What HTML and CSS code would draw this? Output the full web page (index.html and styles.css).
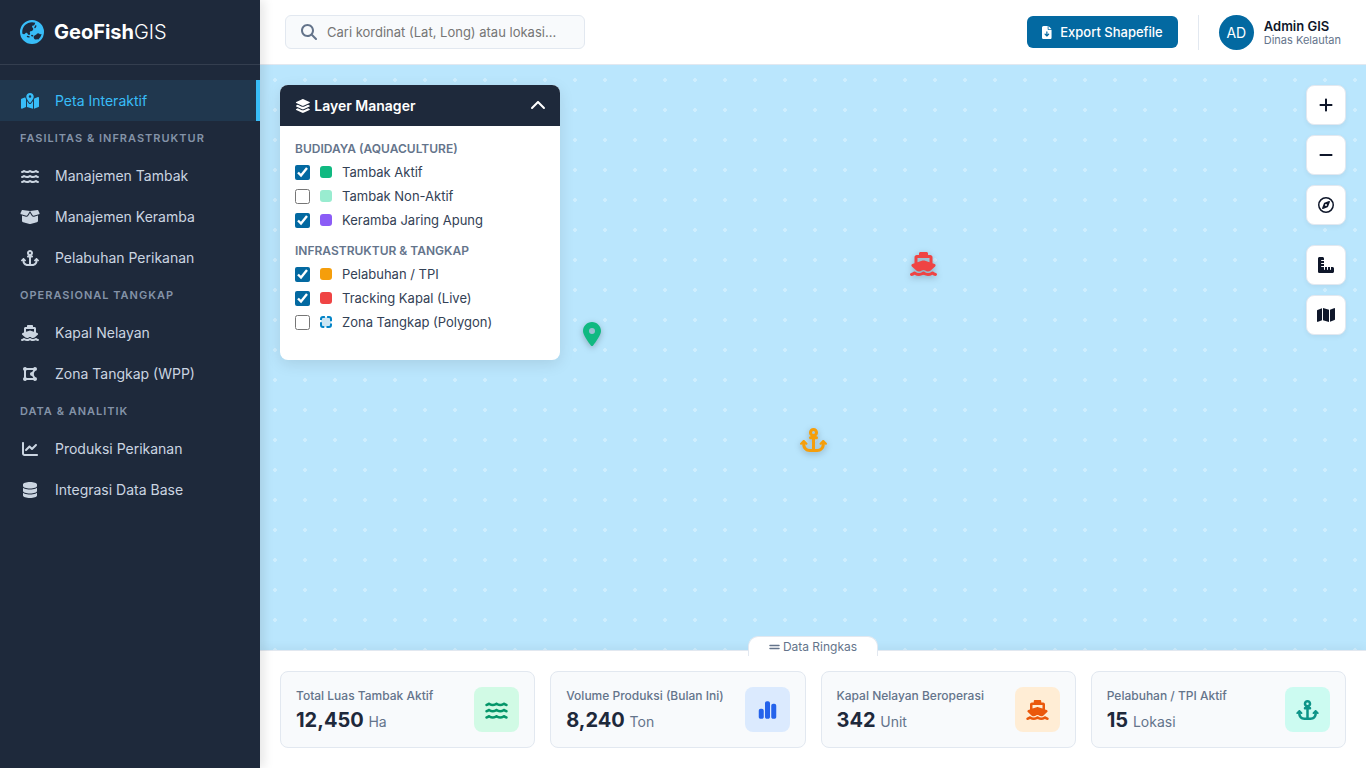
FILE: index.html
```html
<!DOCTYPE html>
<html lang="en">
<head>
    <meta charset="UTF-8">
    <meta name="viewport" content="width=device-width, initial-scale=1.0">
    <title>GeoFishGIS</title>
    <link rel="stylesheet" href="styles.css">
</head>
<body>
    <!-- Icon sprite -->
    <svg class="sprite" xmlns="http://www.w3.org/2000/svg">
        <symbol id="i-earth" viewBox="0 0 512 512"><path d="M51.7 295.1l31.7 6.3c7.9 1.6 16-.9 21.7-6.6l15.4-15.4c11.6-11.6 31.1-8.4 38.4 6.2l9.3 18.5c4.8 9.6 14.6 15.7 25.4 15.7c15.2 0 26.1-14.6 21.7-29.2l-6-19.9c-4.6-15.4 6.9-30.9 23-30.9h2.3c13.4 0 25.9-6.7 33.3-17.8l10.7-16.1c5.6-8.5 5.3-19.6-.8-27.7l-16.1-21.5c-10.3-13.7-3.3-33.5 13.4-37.6l17-4.3c7.5-1.9 13.6-7.2 16.5-14.4l16.4-40.9C303.4 52.1 280.2 48 256 48C141.1 48 48 141.1 48 256c0 13.4 1.3 26.5 3.7 39.1zm407.7 4.6c-3-.3-6-.1-9 .8l-15.8 4.4c-6.7 1.9-13.8-.9-17.5-6.7l-2-3.1c-6-9.4-16.4-15.1-27.6-15.1s-21.6 5.7-27.6 15.1l-6.1 9.5c-1.4 2.2-3.4 4.1-5.7 5.3L312 330.1c-18.1 10.1-25.5 32.4-17 51.3l5.5 12.4c8.6 19.2 30.7 28.5 50.5 21.1l2.6-1c10-3.7 21.3-2.2 29.9 4.1l1.5 1.1c37.2-29.5 64.1-71.4 74.4-119.5zM0 256a256 256 0 1 1 512 0A256 256 0 1 1 0 256zm144.5 92.1c-2.1 8.6 3.1 17.3 11.6 19.4l32 8c8.6 2.1 17.3-3.1 19.4-11.6s-3.1-17.3-11.6-19.4l-32-8c-8.6-2.1-17.3 3.1-19.4 11.6zm92-20c-2.1 8.6 3.1 17.3 11.6 19.4l16 4c8.6 2.1 17.3-3.1 19.4-11.6s-3.1-17.3-11.6-19.4l-16-4c-8.6-2.1-17.3 3.1-19.4 11.6zM343.2 113.7c-7.9-4-17.5-.7-21.5 7.2l-16 32c-4 7.9-.7 17.5 7.2 21.5s17.5 .7 21.5-7.2l16-32c4-7.9 .7-17.5-7.2-21.5z"/></symbol>
        <symbol id="i-map-dot" viewBox="0 0 576 512"><path d="M408 120c0 54.6-73.1 151.9-105.2 192c-7.7 9.6-22 9.6-29.6 0C241.1 271.9 168 174.6 168 120C168 53.7 221.7 0 288 0s120 53.7 120 120zm8 80.4c3.5-6.9 6.7-13.8 9.6-20.6c.5-1.2 1-2.5 1.5-3.7l116-46.4C558.9 123.4 576 135 576 152V422.8c0 9.8-6 18.6-15.1 22.3L416 503V200.4zM137.6 138.3c2.4 14.1 7.2 28.3 12.8 41.5c2.9 6.8 6.1 13.7 9.6 20.6V451.8L32.9 502.7C17.1 509 0 497.4 0 480.4V209.6c0-9.8 6-18.6 15.1-22.3l122.6-49zM327.8 332c13.9-17.4 35.7-45.7 56.2-77V504.3L192 449.4V255c20.5 31.3 42.3 59.6 56.2 77c20.5 25.6 59.1 25.6 79.6 0zM288 152a40 40 0 1 0 0-80 40 40 0 1 0 0 80z"/></symbol>
        <symbol id="i-water" viewBox="0 0 576 512"><path d="M269.5 69.9c11.1-7.9 25.9-7.9 37 0C329 85.4 356.5 96 384 96c26.9 0 55.4-10.8 77.4-26.1l0 0c11.9-8.5 28.1-7.8 39.2 1.7c14.4 11.9 32.5 21 50.6 25.2c17.2 4 27.9 21.2 23.9 38.4s-21.2 27.9-38.4 23.9c-24.5-5.7-44.9-16.5-58.2-25C449.5 149.7 417 160 384 160c-31.9 0-60.6-9.9-80.4-18.9c-5.8-2.7-11.1-5.3-15.6-7.7c-4.5 2.4-9.7 5.1-15.6 7.7c-19.8 9-48.5 18.9-80.4 18.9c-33 0-65.5-10.3-94.5-25.8c-13.4 8.4-33.7 19.3-58.2 25c-17.2 4-34.4-6.7-38.4-23.9s6.7-34.4 23.9-38.4c18.1-4.2 36.2-13.3 50.6-25.2c11.1-9.4 27.3-10.1 39.2-1.7l0 0C136.7 85.2 165.1 96 192 96c27.5 0 55-10.6 77.5-26.1z"/><path transform="translate(0 160)" d="M269.5 69.9c11.1-7.9 25.9-7.9 37 0C329 85.4 356.5 96 384 96c26.9 0 55.4-10.8 77.4-26.1l0 0c11.9-8.5 28.1-7.8 39.2 1.7c14.4 11.9 32.5 21 50.6 25.2c17.2 4 27.9 21.2 23.9 38.4s-21.2 27.9-38.4 23.9c-24.5-5.7-44.9-16.5-58.2-25C449.5 149.7 417 160 384 160c-31.9 0-60.6-9.9-80.4-18.9c-5.8-2.7-11.1-5.3-15.6-7.7c-4.5 2.4-9.7 5.1-15.6 7.7c-19.8 9-48.5 18.9-80.4 18.9c-33 0-65.5-10.3-94.5-25.8c-13.4 8.4-33.7 19.3-58.2 25c-17.2 4-34.4-6.7-38.4-23.9s6.7-34.4 23.9-38.4c18.1-4.2 36.2-13.3 50.6-25.2c11.1-9.4 27.3-10.1 39.2-1.7l0 0C136.7 85.2 165.1 96 192 96c27.5 0 55-10.6 77.5-26.1z"/><path transform="translate(0 320)" d="M269.5 69.9c11.1-7.9 25.9-7.9 37 0C329 85.4 356.5 96 384 96c26.9 0 55.4-10.8 77.4-26.1l0 0c11.9-8.5 28.1-7.8 39.2 1.7c14.4 11.9 32.5 21 50.6 25.2c17.2 4 27.9 21.2 23.9 38.4s-21.2 27.9-38.4 23.9c-24.5-5.7-44.9-16.5-58.2-25C449.5 149.7 417 160 384 160c-31.9 0-60.6-9.9-80.4-18.9c-5.8-2.7-11.1-5.3-15.6-7.7c-4.5 2.4-9.7 5.1-15.6 7.7c-19.8 9-48.5 18.9-80.4 18.9c-33 0-65.5-10.3-94.5-25.8c-13.4 8.4-33.7 19.3-58.2 25c-17.2 4-34.4-6.7-38.4-23.9s6.7-34.4 23.9-38.4c18.1-4.2 36.2-13.3 50.6-25.2c11.1-9.4 27.3-10.1 39.2-1.7l0 0C136.7 85.2 165.1 96 192 96c27.5 0 55-10.6 77.5-26.1z"/></symbol>
        <symbol id="i-box" viewBox="0 0 640 512"><path d="M58.9 42.1c3-6.1 9.6-9.6 16.3-8.7L320 64 564.8 33.4c6.7-.8 13.3 2.7 16.3 8.7l41.7 83.4c9 17.9-.6 39.6-19.8 45.1L439.6 217.3c-13.9 4-28.8-1.9-36.2-14.3L320 64 236.6 203c-7.4 12.4-22.3 18.3-36.2 14.3L37.1 170.6c-19.3-5.5-28.8-27.2-19.8-45.1L58.9 42.1zM321.1 128l54.9 91.4c14.9 24.8 44.6 36.6 72.5 28.6L576 211.6v167c0 22-15 41.2-36.4 46.6l-204.1 51c-10.2 2.6-20.9 2.6-31 0l-204.1-51C79 419.7 64 400.5 64 378.5v-167L191.6 248c27.8 8 57.6-3.8 72.5-28.6L318.9 128h2.2z"/></symbol>
        <symbol id="i-anchor" viewBox="0 0 576 512"><path d="M320 96a32 32 0 1 1 -64 0 32 32 0 1 1 64 0zm21.1 80C367 158.8 384 129.4 384 96c0-53-43-96-96-96s-96 43-96 96c0 33.4 17 62.8 42.9 80H224c-17.7 0-32 14.3-32 32s14.3 32 32 32h32V448H208c-53 0-96-43-96-96v-6.1l7 7c9.4 9.4 24.6 9.4 33.9 0s9.4-24.6 0-33.9L97 263c-9.4-9.4-24.6-9.4-33.9 0L7 319c-9.4 9.4-9.4 24.6 0 33.9s24.6 9.4 33.9 0l7-7V352c0 88.4 71.6 160 160 160h80 80c88.4 0 160-71.6 160-160v-6.1l7 7c9.4 9.4 24.6 9.4 33.9 0s9.4-24.6 0-33.9l-56-56c-9.4-9.4-24.6-9.4-33.9 0l-56 56c-9.4 9.4-9.4 24.6 0 33.9s24.6 9.4 33.9 0l7-7V352c0 53-43 96-96 96H320V240h32c17.7 0 32-14.3 32-32s-14.3-32-32-32H341.1z"/></symbol>
        <symbol id="i-ship" viewBox="0 0 576 512"><path d="M192 32c0-17.7 14.3-32 32-32H352c17.7 0 32 14.3 32 32V64h48c26.5 0 48 21.5 48 48V240l44.4 14.8c23.1 7.7 29.5 37.5 11.5 53.9l-101 92.6c-16.2 9.4-34.7 15.1-50.9 15.1c-19.6 0-40.8-7.7-59.2-20.3c-22.1-15.5-51.6-15.5-73.7 0c-17.1 11.8-38 20.3-59.2 20.3c-16.2 0-34.7-5.7-50.9-15.1l-101-92.6c-18-16.5-11.6-46.2 11.5-53.9L96 240V112c0-26.5 21.5-48 48-48h48V32zM160 218.7l107.8-35.9c13.1-4.4 27.3-4.4 40.5 0L416 218.7V128H160v90.7zM306.5 421.9C329 437.4 356.5 448 384 448c26.9 0 55.4-10.8 77.4-26.1l0 0c11.9-8.5 28.1-7.8 39.2 1.7c14.4 11.9 32.5 21 50.6 25.2c17.2 4 27.9 21.2 23.9 38.4s-21.2 27.9-38.4 23.9c-24.5-5.7-44.9-16.5-58.2-25C449.5 501.7 417 512 384 512c-31.9 0-60.6-9.9-80.4-18.9c-5.8-2.7-11.1-5.3-15.6-7.7c-4.5 2.4-9.7 5.1-15.6 7.7c-19.8 9-48.5 18.9-80.4 18.9c-33 0-65.5-10.3-94.5-25.8c-13.4 8.4-33.7 19.3-58.2 25c-17.2 4-34.4-6.7-38.4-23.9s6.7-34.4 23.9-38.4c18.1-4.2 36.2-13.3 50.6-25.2c11.1-9.4 27.3-10.1 39.2-1.7l0 0C136.7 437.2 165.1 448 192 448c27.5 0 55-10.6 77.5-26.1c11.1-7.9 25.9-7.9 37 0z"/></symbol>
        <symbol id="i-polygon" viewBox="0 0 448 512"><path d="M96 151.4V360.6c9.7 5.6 17.8 13.7 23.4 23.4H328.6c0-.1 .1-.2 .1-.3l-4.5-7.9-32-56 0 0c-1.4 .1-2.8 .1-4.2 .1c-35.3 0-64-28.7-64-64s28.7-64 64-64c1.4 0 2.9 0 4.3 .1l0 0 32-56 4.5-7.9-.1-.3H119.4c-5.6 9.7-13.7 17.8-23.4 23.4zM384.3 352c35.2 .2 63.7 28.7 63.7 64c0 35.3-28.7 64-64 64c-23.7 0-44.4-12.9-55.4-32H119.4c-11.1 19.1-31.7 32-55.4 32c-35.3 0-64-28.7-64-64c0-23.7 12.9-44.4 32-55.4V151.4C12.9 140.4 0 119.7 0 96C0 60.7 28.7 32 64 32c23.7 0 44.4 12.9 55.4 32H328.6c11.1-19.1 31.7-32 55.4-32c35.3 0 64 28.7 64 64c0 35.3-28.5 63.8-63.7 64l-4.5 7.9-32 56-2.3 4c4.2 8.5 6.5 18 6.5 28.1s-2.3 19.6-6.5 28.1l2.3 4 32 56 4.5 7.9z"/></symbol>
        <symbol id="i-chart" viewBox="0 0 512 512"><path d="M64 64c0-17.7-14.3-32-32-32S0 46.3 0 64V400c0 44.2 35.8 80 80 80H480c17.7 0 32-14.3 32-32s-14.3-32-32-32H80c-8.8 0-16-7.2-16-16V64zm406.6 86.6c12.5-12.5 12.5-32.8 0-45.3s-32.8-12.5-45.3 0L320 210.7l-57.4-57.4c-12.5-12.5-32.8-12.5-45.3 0l-112 112c-12.5 12.5-12.5 32.8 0 45.3s32.8 12.5 45.3 0L240 221.3l57.4 57.4c12.5 12.5 32.8 12.5 45.3 0l128-128z"/></symbol>
        <symbol id="i-database" viewBox="0 0 448 512"><path d="M448 80v48c0 44.2-100.3 80-224 80S0 172.2 0 128V80C0 35.8 100.3 0 224 0S448 35.8 448 80zM393.2 214.7c20.8-7.4 39.9-16.9 54.8-28.6V288c0 44.2-100.3 80-224 80S0 332.2 0 288V186.1c14.9 11.8 34 21.2 54.8 28.6C99.7 230.7 159.5 240 224 240s124.3-9.3 169.2-25.3zM0 346.1c14.9 11.8 34 21.2 54.8 28.6C99.7 390.7 159.5 400 224 400s124.3-9.3 169.2-25.3c20.8-7.4 39.9-16.9 54.8-28.6V432c0 44.2-100.3 80-224 80S0 476.2 0 432V346.1z"/></symbol>
        <symbol id="i-search" viewBox="0 0 512 512"><path d="M416 208c0 45.9-14.9 88.3-40 122.7L502.6 457.4c12.5 12.5 12.5 32.8 0 45.3s-32.8 12.5-45.3 0L330.7 376c-34.4 25.2-76.8 40-122.7 40C93.1 416 0 322.9 0 208S93.1 0 208 0S416 93.1 416 208zM208 352a144 144 0 1 0 0-288 144 144 0 1 0 0 288z"/></symbol>
        <symbol id="i-file" viewBox="0 0 384 512"><path d="M64 0C28.7 0 0 28.7 0 64V448c0 35.3 28.7 64 64 64H320c35.3 0 64-28.7 64-64V160H256c-17.7 0-32-14.3-32-32V0H64zM256 0V128H384L256 0zM216 232V334.1l31-31c9.4-9.4 24.6-9.4 33.9 0s9.4 24.6 0 33.9l-72 72c-9.4 9.4-24.6 9.4-33.9 0l-72-72c-9.4-9.4-9.4-24.6 0-33.9s24.6-9.4 33.9 0l31 31V232c0-13.3 10.7-24 24-24s24 10.7 24 24z"/></symbol>
        <symbol id="i-layers" viewBox="0 0 576 512"><path d="M264.5 5.2c14.9-6.9 32.1-6.9 47 0l218.6 101c8.5 3.9 13.9 12.4 13.9 21.8s-5.4 17.9-13.9 21.8l-218.6 101c-14.9 6.9-32.1 6.9-47 0L45.9 149.8C37.4 145.8 32 137.3 32 128s5.4-17.9 13.9-21.8L264.5 5.2zM476.9 209.6l53.2 24.6c8.5 3.9 13.9 12.4 13.9 21.8s-5.4 17.9-13.9 21.8l-218.6 101c-14.9 6.9-32.1 6.9-47 0L45.9 277.8C37.4 273.8 32 265.3 32 256s5.4-17.9 13.9-21.8l53.2-24.6 152 70.2c23.4 10.8 50.4 10.8 73.8 0l152-70.2zm-152 198.2l152-70.2 53.2 24.6c8.5 3.9 13.9 12.4 13.9 21.8s-5.4 17.9-13.9 21.8l-218.6 101c-14.9 6.9-32.1 6.9-47 0L45.9 405.8C37.4 401.8 32 393.3 32 384s5.4-17.9 13.9-21.8l53.2-24.6 152 70.2c23.4 10.8 50.4 10.8 73.8 0z"/></symbol>
        <symbol id="i-chevron" viewBox="0 0 512 512"><path d="M233.4 105.4c12.5-12.5 32.8-12.5 45.3 0l192 192c12.5 12.5 12.5 32.8 0 45.3s-32.8 12.5-45.3 0L256 173.3 86.6 342.6c-12.5 12.5-32.8 12.5-45.3 0s-12.5-32.8 0-45.3l192-192z"/></symbol>
        <symbol id="i-plus" viewBox="0 0 448 512"><path d="M256 80c0-17.7-14.3-32-32-32s-32 14.3-32 32V224H48c-17.7 0-32 14.3-32 32s14.3 32 32 32H192V432c0 17.7 14.3 32 32 32s32-14.3 32-32V288H400c17.7 0 32-14.3 32-32s-14.3-32-32-32H256V80z"/></symbol>
        <symbol id="i-minus" viewBox="0 0 448 512"><path d="M432 256c0 17.7-14.3 32-32 32L48 288c-17.7 0-32-14.3-32-32s14.3-32 32-32l352 0c17.7 0 32 14.3 32 32z"/></symbol>
        <symbol id="i-compass" viewBox="0 0 512 512"><path d="M464 256A208 208 0 1 0 48 256a208 208 0 1 0 416 0zM0 256a256 256 0 1 1 512 0A256 256 0 1 1 0 256zm306.7 69.1L162.4 380.6c-19.4 7.5-38.5-11.6-31-31l55.5-144.3c3.3-8.5 9.9-15.1 18.4-18.4l144.3-55.5c19.4-7.5 38.5 11.6 31 31L325.1 306.7c-3.2 8.5-9.9 15.1-18.4 18.4zM288 256a32 32 0 1 0 -64 0 32 32 0 1 0 64 0z"/></symbol>
        <symbol id="i-ruler" viewBox="0 0 512 512"><path d="M.2 468.9C2.7 493.1 23.1 512 48 512l96 0 320 0c26.5 0 48-21.5 48-48l0-96c0-26.5-21.5-48-48-48l-48 0 0 80c0 8.8-7.2 16-16 16s-16-7.2-16-16l0-80-64 0 0 80c0 8.8-7.2 16-16 16s-16-7.2-16-16l0-80-64 0 0 80c0 8.8-7.2 16-16 16s-16-7.2-16-16l0-80-80 0c-8.8 0-16-7.2-16-16s7.2-16 16-16l80 0 0-64-80 0c-8.8 0-16-7.2-16-16s7.2-16 16-16l80 0 0-64-80 0c-8.8 0-16-7.2-16-16s7.2-16 16-16l80 0 0-48c0-26.5-21.5-48-48-48L48 0C21.5 0 0 21.5 0 48L0 368l0 96c0 1.7 .1 3.3 .2 4.9z"/></symbol>
        <symbol id="i-map" viewBox="0 0 576 512"><path d="M384 476.1L192 421.2V35.9L384 90.8V476.1zm32-1.2V88.4L543.1 37.5c15.8-6.3 32.9 5.3 32.9 22.3V394.6c0 9.8-6 18.6-15.1 22.3L416 474.8zM15.1 95.1L160 37.2V423.6L32.9 474.5C17.1 480.8 0 469.2 0 452.2V117.4c0-9.8 6-18.6 15.1-22.3z"/></symbol>
        <symbol id="i-pin" viewBox="0 0 384 512"><path d="M215.7 499.2C267 435 384 279.4 384 192C384 86 298 0 192 0S0 86 0 192c0 87.4 117 243 168.3 307.2c12.3 15.3 35.1 15.3 47.4 0zM192 128a64 64 0 1 1 0 128 64 64 0 1 1 0-128z"/></symbol>
        <symbol id="i-bars" viewBox="0 0 448 512"><path d="M160 80c0-26.5 21.5-48 48-48h32c26.5 0 48 21.5 48 48V432c0 26.5-21.5 48-48 48H208c-26.5 0-48-21.5-48-48V80zM0 272c0-26.5 21.5-48 48-48H80c26.5 0 48 21.5 48 48V432c0 26.5-21.5 48-48 48H48c-26.5 0-48-21.5-48-48V272zM368 96h32c26.5 0 48 21.5 48 48V432c0 26.5-21.5 48-48 48H368c-26.5 0-48-21.5-48-48V144c0-26.5 21.5-48 48-48z"/></symbol>
        <symbol id="i-grip" viewBox="0 0 448 512"><path d="M32 288c-17.7 0-32 14.3-32 32s14.3 32 32 32l384 0c17.7 0 32-14.3 32-32s-14.3-32-32-32L32 288zm0-128c-17.7 0-32 14.3-32 32s14.3 32 32 32l384 0c17.7 0 32-14.3 32-32s-14.3-32-32-32L32 160z"/></symbol>
    </svg>

    <div class="app">
        <!-- Sidebar -->
        <aside class="sidebar">
            <div class="brand">
                <svg class="brand-icon"><use href="#i-earth"/></svg>
                <span class="brand-name">GeoFish<span class="brand-light">GIS</span></span>
            </div>
            <nav class="nav">
                <a class="nav-item active"><svg class="nav-icon"><use href="#i-map-dot"/></svg>Peta Interaktif</a>
                <div class="nav-label">Fasilitas &amp; Infrastruktur</div>
                <a class="nav-item"><svg class="nav-icon"><use href="#i-water"/></svg>Manajemen Tambak</a>
                <a class="nav-item"><svg class="nav-icon"><use href="#i-box"/></svg>Manajemen Keramba</a>
                <a class="nav-item"><svg class="nav-icon"><use href="#i-anchor"/></svg>Pelabuhan Perikanan</a>
                <div class="nav-label">Operasional Tangkap</div>
                <a class="nav-item"><svg class="nav-icon"><use href="#i-ship"/></svg>Kapal Nelayan</a>
                <a class="nav-item"><svg class="nav-icon"><use href="#i-polygon"/></svg>Zona Tangkap (WPP)</a>
                <div class="nav-label">Data &amp; Analitik</div>
                <a class="nav-item"><svg class="nav-icon"><use href="#i-chart"/></svg>Produksi Perikanan</a>
                <a class="nav-item"><svg class="nav-icon"><use href="#i-database"/></svg>Integrasi Data Base</a>
            </nav>
        </aside>

        <main class="main">
            <!-- Top bar -->
            <header class="topbar">
                <div class="search">
                    <svg class="search-icon"><use href="#i-search"/></svg>
                    <input type="text" placeholder="Cari kordinat (Lat, Long) atau lokasi...">
                </div>
                <div class="topbar-right">
                    <button class="btn-export"><svg class="btn-icon"><use href="#i-file"/></svg>Export Shapefile</button>
                    <div class="divider"></div>
                    <div class="user">
                        <div class="avatar">AD</div>
                        <div>
                            <div class="user-name">Admin GIS</div>
                            <div class="user-role">Dinas Kelautan</div>
                        </div>
                    </div>
                </div>
            </header>

            <!-- Map -->
            <section class="map">
                <div class="layer-panel">
                    <div class="layer-head">
                        <span class="layer-title"><svg class="layer-icon"><use href="#i-layers"/></svg>Layer Manager</span>
                        <svg class="layer-toggle"><use href="#i-chevron"/></svg>
                    </div>
                    <div class="layer-body">
                        <div class="layer-group">
                            <div class="layer-label">Budidaya (Aquaculture)</div>
                            <label class="layer-row"><input type="checkbox" checked><span class="swatch green"></span>Tambak Aktif</label>
                            <label class="layer-row"><input type="checkbox"><span class="swatch mint"></span>Tambak Non-Aktif</label>
                            <label class="layer-row"><input type="checkbox" checked><span class="swatch purple"></span>Keramba Jaring Apung</label>
                        </div>
                        <div class="layer-group">
                            <div class="layer-label">Infrastruktur &amp; Tangkap</div>
                            <label class="layer-row"><input type="checkbox" checked><span class="swatch orange"></span>Pelabuhan / TPI</label>
                            <label class="layer-row"><input type="checkbox" checked><span class="swatch red"></span>Tracking Kapal (Live)</label>
                            <label class="layer-row"><input type="checkbox"><svg class="swatch swatch-zone" viewBox="0 0 12 12"><rect x="1" y="1" width="10" height="10" rx="2"/></svg>Zona Tangkap (Polygon)</label>
                        </div>
                    </div>
                </div>

                <svg class="marker marker-ship"><use href="#i-ship"/></svg>
                <svg class="marker marker-anchor"><use href="#i-anchor"/></svg>
                <svg class="marker marker-pin"><use href="#i-pin"/></svg>

                <div class="map-controls">
                    <div class="control-group">
                        <button class="control"><svg class="control-icon"><use href="#i-plus"/></svg></button>
                        <button class="control"><svg class="control-icon"><use href="#i-minus"/></svg></button>
                        <button class="control"><svg class="control-icon"><use href="#i-compass"/></svg></button>
                    </div>
                    <div class="control-group">
                        <button class="control"><svg class="control-icon"><use href="#i-ruler"/></svg></button>
                        <button class="control"><svg class="control-icon"><use href="#i-map"/></svg></button>
                    </div>
                </div>
            </section>

            <!-- Summary -->
            <section class="summary">
                <div class="summary-tab"><svg class="tab-icon"><use href="#i-grip"/></svg>Data Ringkas</div>
                <div class="stat">
                    <div>
                        <div class="stat-label">Total Luas Tambak Aktif</div>
                        <div class="stat-value">12,450 <span class="stat-unit">Ha</span></div>
                    </div>
                    <div class="stat-icon tint-green"><svg><use href="#i-water"/></svg></div>
                </div>
                <div class="stat">
                    <div>
                        <div class="stat-label">Volume Produksi (Bulan Ini)</div>
                        <div class="stat-value">8,240 <span class="stat-unit">Ton</span></div>
                    </div>
                    <div class="stat-icon tint-blue"><svg><use href="#i-bars"/></svg></div>
                </div>
                <div class="stat">
                    <div>
                        <div class="stat-label">Kapal Nelayan Beroperasi</div>
                        <div class="stat-value">342 <span class="stat-unit">Unit</span></div>
                    </div>
                    <div class="stat-icon tint-orange"><svg><use href="#i-ship"/></svg></div>
                </div>
                <div class="stat">
                    <div>
                        <div class="stat-label">Pelabuhan / TPI Aktif</div>
                        <div class="stat-value">15 <span class="stat-unit">Lokasi</span></div>
                    </div>
                    <div class="stat-icon tint-teal"><svg><use href="#i-anchor"/></svg></div>
                </div>
            </section>
        </main>
    </div>
</body>
</html>
```
FILE: styles.css
```css
* {
    box-sizing: border-box;
}

body {
    margin: 0;
    font-family: Inter, "Noto Sans", sans-serif;
    color: #1e293b;
    background: #fff;
    overflow: hidden;
}

svg {
    fill: currentColor;
    display: block;
}

.sprite {
    display: none;
}

.app {
    display: flex;
    height: 100vh;
}

/* Sidebar */
.sidebar {
    width: 260px;
    flex-shrink: 0;
    background: #1e293b;
    color: #cbd5e1;
    box-shadow: 4px 0 10px rgba(0, 0, 0, 0.1);
    position: relative;
    z-index: 20;
}

.brand {
    height: 65px;
    display: flex;
    align-items: center;
    gap: 10px;
    padding: 0 20px;
    border-bottom: 1px solid rgba(255, 255, 255, 0.1);
}

.brand-icon {
    width: 24px;
    height: 24px;
    color: #38bdf8;
}

.brand-name {
    font-size: 20px;
    font-weight: 700;
    color: #fff;
}

.brand-light {
    font-weight: 300;
}

.nav {
    padding-top: 15px;
}

.nav-item {
    display: flex;
    align-items: center;
    height: 41px;
    padding: 0 20px;
    font-size: 14px;
    color: #cbd5e1;
}

.nav-item.active {
    color: #38bdf8;
    background: rgba(56, 189, 248, 0.1);
    border-right: 4px solid #38bdf8;
}

.nav-icon {
    width: 20px;
    height: 16px;
    margin-right: 15px;
}

.nav-label {
    height: 34px;
    line-height: 34px;
    padding: 0 20px;
    font-size: 11px;
    font-weight: 600;
    letter-spacing: 1px;
    text-transform: uppercase;
    color: #8493a8;
}

/* Top bar */
.main {
    flex: 1;
    min-width: 0;
    display: flex;
    flex-direction: column;
}

.topbar {
    height: 65px;
    flex-shrink: 0;
    display: flex;
    align-items: center;
    justify-content: space-between;
    padding: 0 25px;
    background: #fff;
    border-bottom: 1px solid #e2e8f0;
}

.search {
    width: 300px;
    height: 34px;
    display: flex;
    align-items: center;
    gap: 10px;
    padding: 0 15px;
    background: #f8fafc;
    border: 1px solid #e2e8f0;
    border-radius: 6px;
}

.search-icon {
    width: 16px;
    height: 16px;
    color: #64748b;
    flex-shrink: 0;
}

.search input {
    flex: 1;
    min-width: 0;
    border: none;
    outline: none;
    padding: 0;
    background: transparent;
    font-family: inherit;
    font-size: 13px;
}

.topbar-right {
    display: flex;
    align-items: center;
    gap: 20px;
}

.btn-export {
    height: 32px;
    display: flex;
    align-items: center;
    gap: 8px;
    padding: 0 15px;
    border: none;
    border-radius: 6px;
    background: #0369a1;
    color: #fff;
    font-family: inherit;
    font-size: 13px;
    font-weight: 500;
}

.btn-icon {
    width: 9.75px;
    height: 13px;
}

.divider {
    width: 1px;
    height: 35px;
    background: #e2e8f0;
}

.user {
    display: flex;
    align-items: center;
    gap: 10px;
}

.avatar {
    width: 35px;
    height: 35px;
    border-radius: 50%;
    background: #0369a1;
    color: #fff;
    font-size: 14px;
    display: flex;
    align-items: center;
    justify-content: center;
}

.user-name {
    font-size: 13px;
    font-weight: 600;
    line-height: 16px;
    color: #0f172a;
}

.user-role {
    font-size: 11px;
    line-height: 13px;
    color: #64748b;
}

/* Map */
.map {
    flex: 1;
    position: relative;
    background-color: #bae6fd;
    background-image: radial-gradient(circle at center, rgba(255, 255, 255, 0.3) 2px, transparent 2px);
    background-size: 30px 30px;
}

.layer-panel {
    position: absolute;
    top: 20px;
    left: 20px;
    width: 280px;
    background: #fff;
    border-radius: 8px;
    overflow: hidden;
    box-shadow: 0 4px 15px rgba(0, 0, 0, 0.1);
}

.layer-head {
    height: 41px;
    display: flex;
    align-items: center;
    justify-content: space-between;
    padding: 0 14px 0 15px;
    background: #1e293b;
    color: #fff;
}

.layer-title {
    display: flex;
    align-items: center;
    gap: 3.5px;
    font-size: 14px;
    font-weight: 600;
}

.layer-icon {
    width: 15.75px;
    height: 14px;
}

.layer-toggle {
    width: 16px;
    height: 16px;
}

.layer-body {
    padding: 15px;
}

.layer-group {
    margin-bottom: 11px;
}

.layer-label {
    height: 15px;
    line-height: 15px;
    margin-bottom: 4px;
    font-size: 12px;
    font-weight: 600;
    text-transform: uppercase;
    color: #64748b;
}

.layer-row {
    height: 24px;
    display: flex;
    align-items: center;
    font-size: 13px;
    color: #334155;
}

.layer-row input {
    width: 15px;
    height: 15px;
    margin: 0 10px 0 0;
    accent-color: #0369a1;
}

.swatch {
    width: 12px;
    height: 12px;
    margin-right: 10px;
    border-radius: 3px;
}

.green { background: #10b981; }
.mint { background: #99ecd0; }
.purple { background: #8b5cf6; }
.orange { background: #f59e0b; }
.red { background: #ef4444; }

.swatch-zone {
    border-radius: 0;
    fill: #cce6f4;
}

.swatch-zone rect {
    stroke: #0284c7;
    stroke-width: 2;
    stroke-dasharray: 6.94 2.2;
    stroke-dashoffset: -4.1;
}

/* Markers sit at their own spots on the map */
.marker {
    position: absolute;
    filter: drop-shadow(0 2px 3px rgba(0, 0, 0, 0.25));
}

.marker-ship {
    left: 650px;
    top: 187px;
    width: 27px;
    height: 24px;
    color: #ef4444;
}

.marker-anchor {
    left: 540px;
    top: 363px;
    width: 27px;
    height: 24px;
    color: #f59e0b;
}

.marker-pin {
    left: 323px;
    top: 257px;
    width: 18px;
    height: 24px;
    color: #10b981;
}

.map-controls {
    position: absolute;
    top: 20px;
    right: 20px;
    display: flex;
    flex-direction: column;
    gap: 20px;
}

.control-group {
    display: flex;
    flex-direction: column;
    gap: 10px;
}

.control {
    width: 40px;
    height: 40px;
    display: flex;
    align-items: center;
    justify-content: center;
    padding: 0;
    background: #fff;
    border: 1px solid #e2e8f0;
    border-radius: 8px;
    color: #0f172a;
    box-shadow: 0 2px 5px rgba(0, 0, 0, 0.05);
}

.control-icon {
    width: 18px;
    height: 16px;
}

/* Summary strip */
.summary {
    position: relative;
    flex-shrink: 0;
    display: grid;
    grid-template-columns: repeat(4, 1fr);
    gap: 15px;
    padding: 20px;
    background: #fff;
    border-top: 1px solid #e2e8f0;
    box-shadow: 0 -2px 10px rgba(0, 0, 0, 0.05);
}

.summary-tab {
    position: absolute;
    top: -15px;
    left: 488px;
    width: 130px;
    height: 20px;
    display: flex;
    align-items: center;
    justify-content: center;
    gap: 3px;
    font-size: 12px;
    color: #64748b;
    background: #fff;
    border: 1px solid #e2e8f0;
    border-bottom: none;
    border-radius: 10px 10px 0 0;
}

.tab-icon {
    width: 11px;
    height: 12px;
}

.stat {
    display: flex;
    align-items: center;
    justify-content: space-between;
    padding: 15px;
    background: #f8fafc;
    border: 1px solid #e2e8f0;
    border-radius: 8px;
}

.stat-label {
    font-size: 12px;
    font-weight: 500;
    line-height: 18px;
    color: #64748b;
}

.stat-value {
    margin-top: 4px;
    font-size: 20px;
    font-weight: 700;
    line-height: 23px;
    color: #1e293b;
}

.stat-unit {
    font-size: 14px;
    font-weight: 400;
    line-height: 1;
    color: #64748b;
}

.stat-icon {
    width: 45px;
    height: 45px;
    flex-shrink: 0;
    display: flex;
    align-items: center;
    justify-content: center;
    border-radius: 8px;
}

.stat-icon svg {
    width: 23px;
    height: 20px;
}

.tint-green { background: #d1fae5; color: #059669; }
.tint-blue { background: #dbeafe; color: #2563eb; }
.tint-orange { background: #ffedd5; color: #ea580c; }
.tint-teal { background: #ccfbf1; color: #0d9488; }
```
